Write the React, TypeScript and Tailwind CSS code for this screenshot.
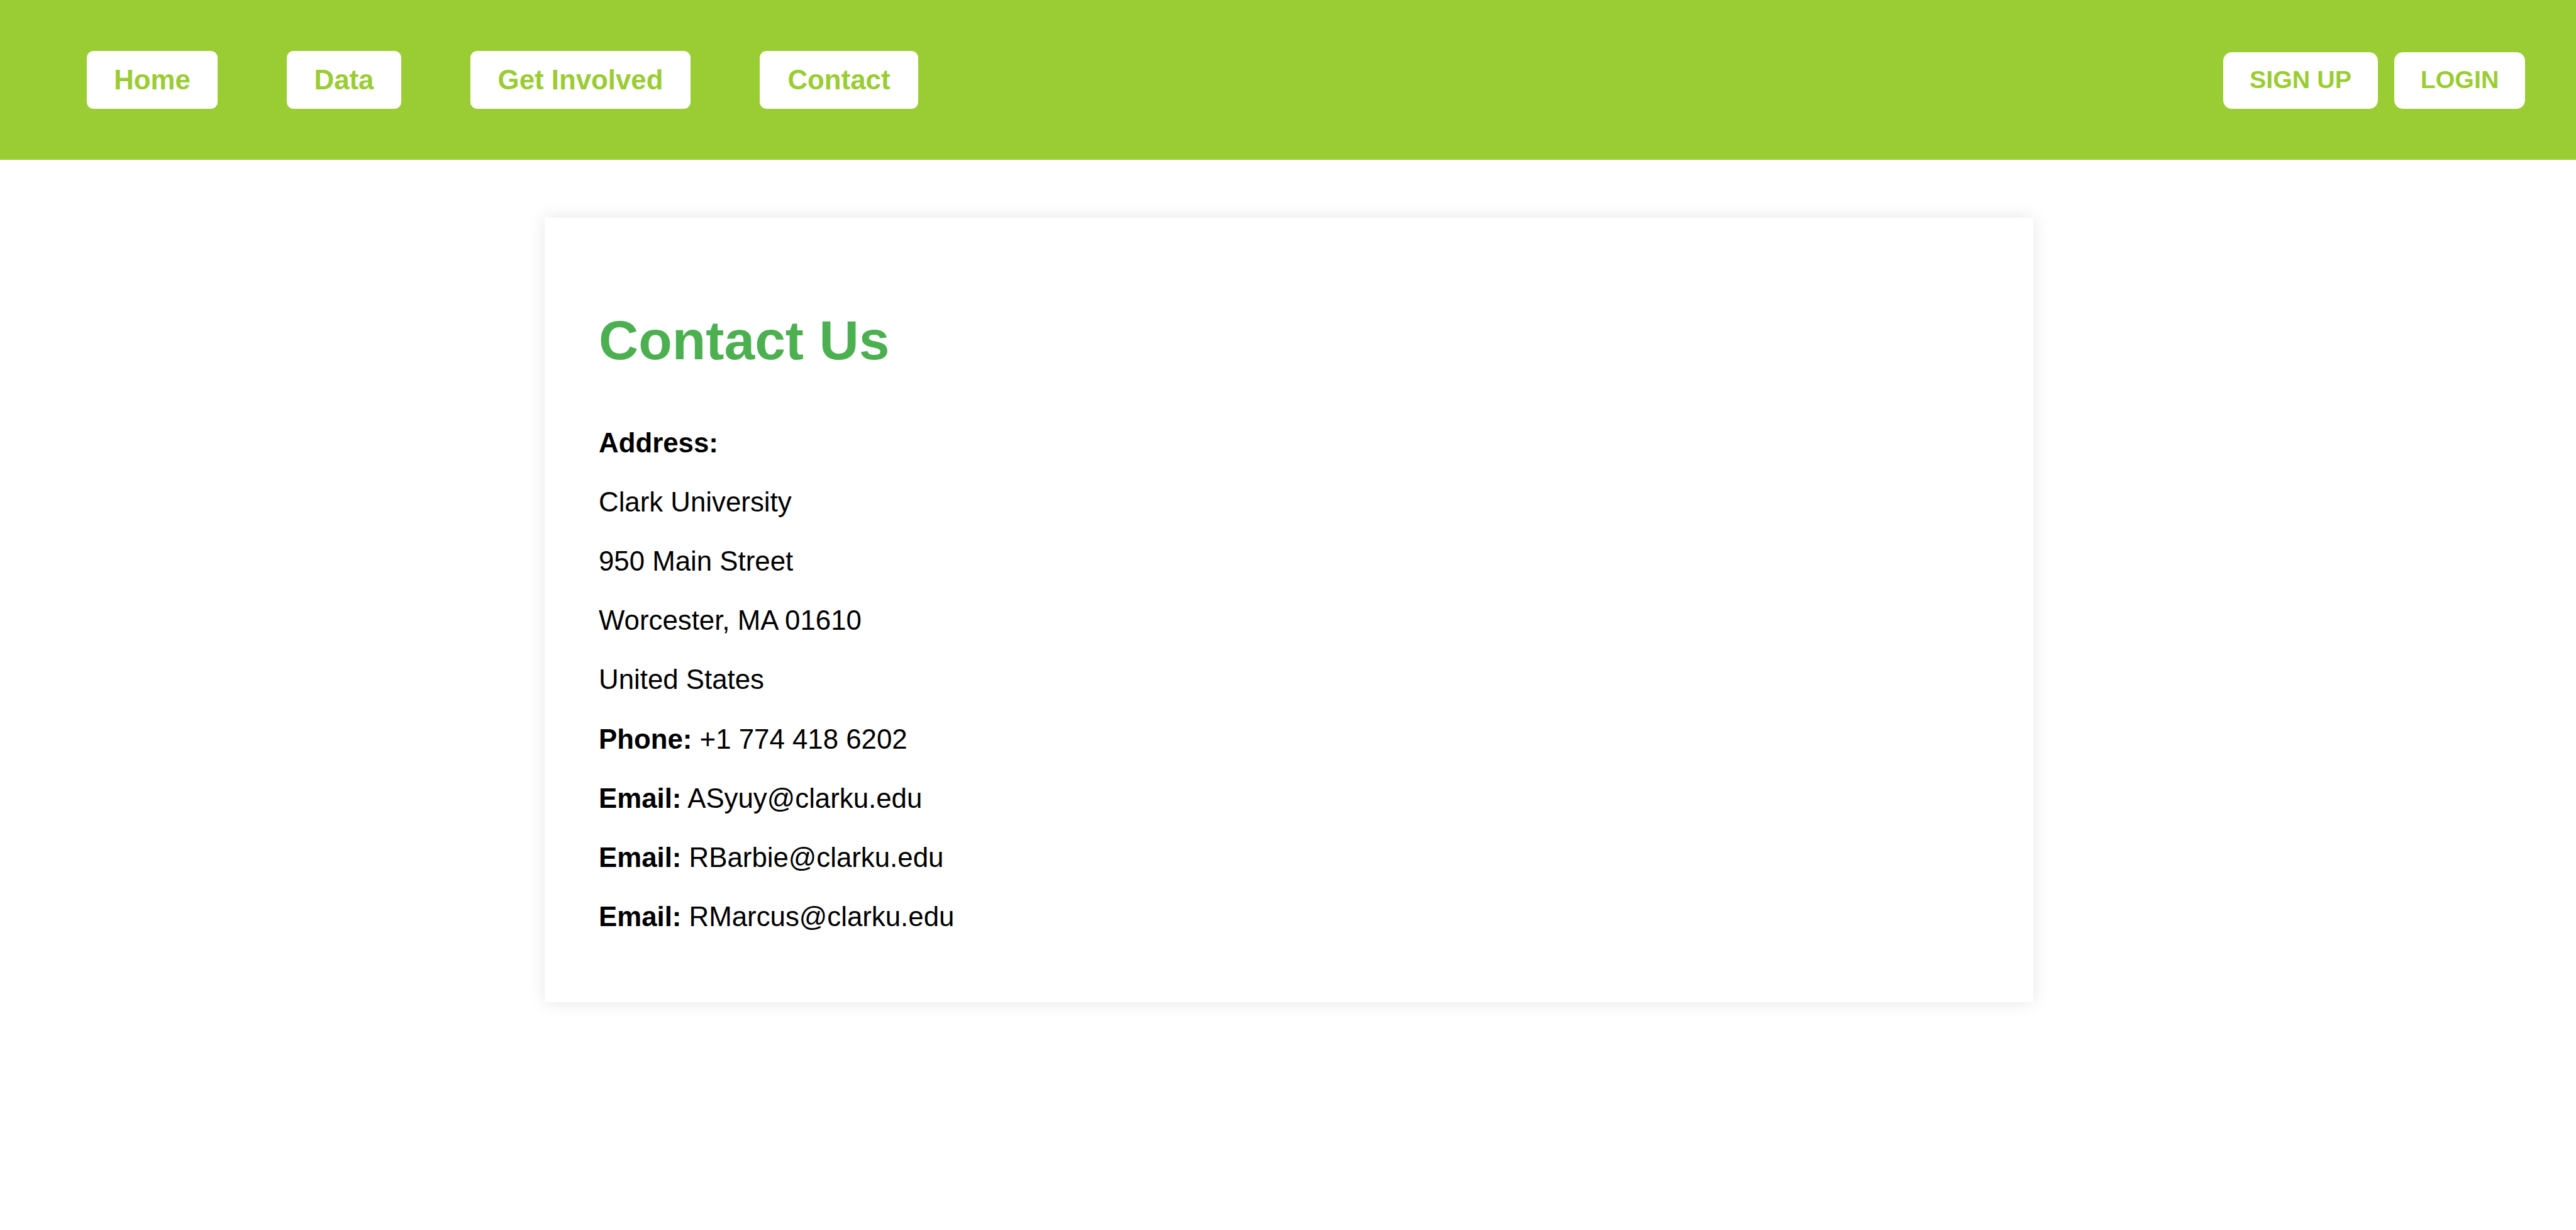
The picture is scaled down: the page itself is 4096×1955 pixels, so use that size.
const nav = [
  { label: "Home", box: "w-[208px]" },
  { label: "Data", box: "w-[182px]" },
  { label: "Get Involved", box: "w-[350px]" },
  { label: "Contact", box: "w-[252px]" },
];

const lines = [
  { label: "Address:", text: "" },
  { label: "", text: "Clark University" },
  { label: "", text: "950 Main Street" },
  { label: "", text: "Worcester, MA 01610" },
  { label: "", text: "United States" },
  { label: "Phone:", text: " +1 774 418 6202" },
  { label: "Email:", text: " ASyuy@clarku.edu" },
  { label: "Email:", text: " RBarbie@clarku.edu" },
  { label: "Email:", text: " RMarcus@clarku.edu" },
];

export default function App() {
  return (
    <div className="h-[1955px] w-[4096px] overflow-hidden bg-white font-['Liberation_Sans',Arial,sans-serif] text-black">
      <header className="flex h-[254px] items-start justify-between bg-[#9acc33] pl-[138px] pr-[81px] pt-[81px] font-bold text-[#9acc33]">
        <nav className="flex gap-[110px]">
          {nav.map((n) => (
            <a key={n.label} className={`flex h-[92px] items-center justify-center whitespace-nowrap rounded-[11px] bg-white text-[43.8px] leading-[50px] ${n.box}`}>
              {n.label}
            </a>
          ))}
        </nav>
        <div className="mt-[2px] flex gap-[26px]">
          <button className="h-[90px] w-[246px] whitespace-nowrap rounded-[14px] bg-white pb-[4px] text-[39.4px] leading-[46px]">SIGN UP</button>
          <button className="h-[90px] w-[208px] whitespace-nowrap rounded-[14px] bg-white pb-[4px] text-[39.4px] leading-[46px]">LOGIN</button>
        </div>
      </header>
      <main className="ml-[866px] mt-[92px] h-[1247px] w-[2367px] bg-white pl-[86px] pt-[145px] shadow-[0_0_27px_rgba(0,0,0,0.1)]">
        <h1 className="text-[87.6px] font-bold leading-[100px] text-[#4caf50]">Contact Us</h1>
        <div className="mt-[87.6px]">
          {lines.map((l, i) => (
            <p key={i} className="h-[94.2px] whitespace-pre text-[43.8px] leading-[50px]">
              <strong className="font-bold">{l.label}</strong>
              {l.text}
            </p>
          ))}
        </div>
      </main>
    </div>
  );
}
